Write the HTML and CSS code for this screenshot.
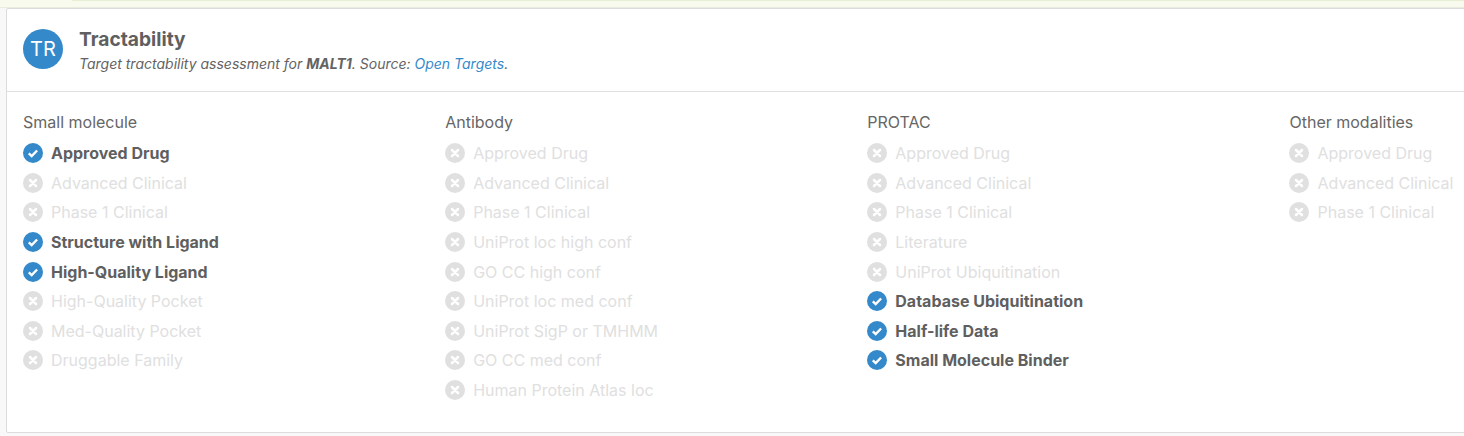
FILE: index.html
```html
<!DOCTYPE html>
<html lang="en">
<head>
<meta charset="utf-8">
<title>Tractability</title>
<link rel="stylesheet" href="styles.css">
</head>
<body>
<svg class="defs" width="0" height="0" aria-hidden="true">
  <symbol id="yes" viewBox="0 0 20 20"><circle cx="10" cy="10" r="10" fill="#3489ca"/><path d="M5.8 10.3l2.9 2.8 5.4-5.6" fill="none" stroke="#fff" stroke-width="2.4"/></symbol>
  <symbol id="no" viewBox="0 0 20 20"><circle cx="10" cy="10" r="10" fill="#e0e0e0"/><path d="M7 7l6 6M13 7l-6 6" fill="none" stroke="#fff" stroke-width="2.5" stroke-linecap="round"/></symbol>
</svg>
<div class="strip"></div>
<section class="card">
  <header class="head">
    <div class="avatar">TR</div>
    <div class="titles">
      <h2 class="title">Tractability</h2>
      <p class="sub">Target tractability assessment for <b>MALT1</b>. Source: <a href="#">Open Targets</a>.</p>
    </div>
  </header>
  <div class="cols">
    <div class="col">
      <h3 class="col-title">Small molecule</h3>
      <ul class="list">
        <li class="item on"><svg class="ic"><use href="#yes"/></svg>Approved Drug</li>
        <li class="item"><svg class="ic"><use href="#no"/></svg>Advanced Clinical</li>
        <li class="item"><svg class="ic"><use href="#no"/></svg>Phase 1 Clinical</li>
        <li class="item on"><svg class="ic"><use href="#yes"/></svg>Structure with Ligand</li>
        <li class="item on"><svg class="ic"><use href="#yes"/></svg>High-Quality Ligand</li>
        <li class="item"><svg class="ic"><use href="#no"/></svg>High-Quality Pocket</li>
        <li class="item"><svg class="ic"><use href="#no"/></svg>Med-Quality Pocket</li>
        <li class="item"><svg class="ic"><use href="#no"/></svg>Druggable Family</li>
      </ul>
    </div>
    <div class="col">
      <h3 class="col-title">Antibody</h3>
      <ul class="list">
        <li class="item"><svg class="ic"><use href="#no"/></svg>Approved Drug</li>
        <li class="item"><svg class="ic"><use href="#no"/></svg>Advanced Clinical</li>
        <li class="item"><svg class="ic"><use href="#no"/></svg>Phase 1 Clinical</li>
        <li class="item"><svg class="ic"><use href="#no"/></svg>UniProt loc high conf</li>
        <li class="item"><svg class="ic"><use href="#no"/></svg>GO CC high conf</li>
        <li class="item"><svg class="ic"><use href="#no"/></svg>UniProt loc med conf</li>
        <li class="item"><svg class="ic"><use href="#no"/></svg>UniProt SigP or TMHMM</li>
        <li class="item"><svg class="ic"><use href="#no"/></svg>GO CC med conf</li>
        <li class="item"><svg class="ic"><use href="#no"/></svg>Human Protein Atlas loc</li>
      </ul>
    </div>
    <div class="col">
      <h3 class="col-title">PROTAC</h3>
      <ul class="list">
        <li class="item"><svg class="ic"><use href="#no"/></svg>Approved Drug</li>
        <li class="item"><svg class="ic"><use href="#no"/></svg>Advanced Clinical</li>
        <li class="item"><svg class="ic"><use href="#no"/></svg>Phase 1 Clinical</li>
        <li class="item"><svg class="ic"><use href="#no"/></svg>Literature</li>
        <li class="item"><svg class="ic"><use href="#no"/></svg>UniProt Ubiquitination</li>
        <li class="item on"><svg class="ic"><use href="#yes"/></svg>Database Ubiquitination</li>
        <li class="item on"><svg class="ic"><use href="#yes"/></svg>Half-life Data</li>
        <li class="item on"><svg class="ic"><use href="#yes"/></svg>Small Molecule Binder</li>
      </ul>
    </div>
    <div class="col">
      <h3 class="col-title">Other modalities</h3>
      <ul class="list">
        <li class="item"><svg class="ic"><use href="#no"/></svg>Approved Drug</li>
        <li class="item"><svg class="ic"><use href="#no"/></svg>Advanced Clinical</li>
        <li class="item"><svg class="ic"><use href="#no"/></svg>Phase 1 Clinical</li>
      </ul>
    </div>
  </div>
</section>
</body>
</html>
```
FILE: styles.css
```css
html, body { margin: 0; padding: 0; height: 436px; overflow: hidden; background: #f8f8f8; }
body { font-family: Inter, "Liberation Sans", sans-serif; color: #5a5a5a; font-size: 16px; }
.defs { display: block; height: 0; }
.strip { height: 7px; background: #f7faec; border-bottom: 1px solid #e9ecde; }
.strip::before { content: ""; display: block; height: 1px; margin-left: 72px; background: #e9f0d8; }
.card { box-sizing: border-box; width: 1500px; height: 425px; margin-left: 6px; background: #fff; border: 1px solid #dcdcdc; border-radius: 2px; }
.head { display: flex; align-items: flex-start; gap: 16px; height: 83px; box-sizing: border-box; padding: 20px 16px 0; border-bottom: 1px solid #e0e0e0; }
.avatar { width: 40px; height: 40px; border-radius: 50%; background: #3489ca; color: #fff; font-size: 20px; line-height: 40px; text-align: center; flex: none; }
.title { margin: 0; font-size: 19.2px; font-weight: 700; line-height: 20px; color: #5f5f5f; }
.sub { margin: 5px 0 0; font-size: 14px; line-height: 20px; font-style: italic; color: #636363; }
.sub a { color: #3489ca; text-decoration: none; }
.cols { display: grid; grid-template-columns: repeat(4, 422.17px); padding: 18px 16px 0; }
.col-title { margin: 0; font-size: 16px; font-weight: 400; line-height: 24px; color: #666; }
.list { list-style: none; margin: 4.45px 0 0; padding: 0; }
.item { display: flex; align-items: center; gap: 8px; height: 29.6px; color: #e0e0e0; }
.item.on { color: #5f5f5f; font-weight: 700; }
.ic { width: 20px; height: 20px; flex: none; }
```
